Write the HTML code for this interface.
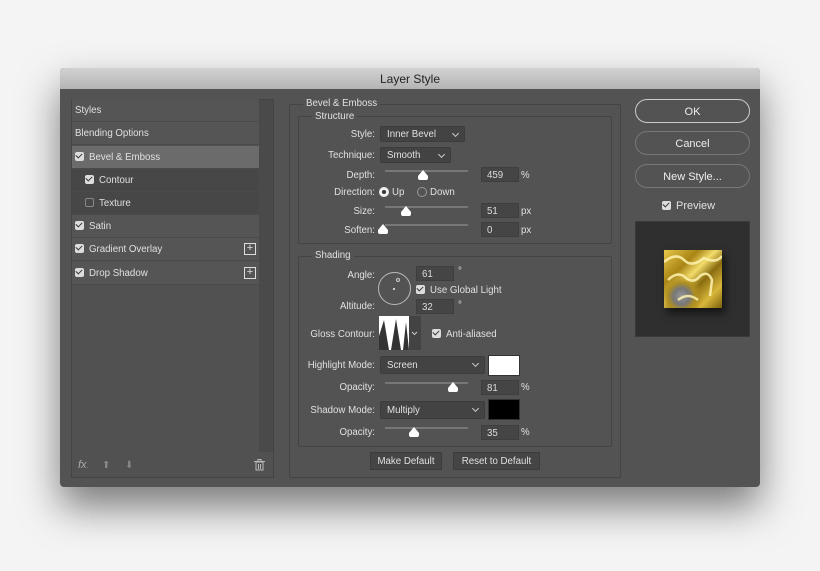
<!DOCTYPE html>
<html><head><style>
*{margin:0;padding:0;box-sizing:border-box}
body{width:820px;height:571px;background:#f4f4f4;font-family:"Liberation Sans",sans-serif;font-size:9.7px;color:#e0e0e0;position:relative;overflow:hidden}
.a{position:absolute}
#dlg{left:60px;top:68px;width:700px;height:419px;background:#535353;border-radius:4px;box-shadow:0 20px 40px rgba(0,0,0,.5)}
#tb{left:60px;top:68px;width:700px;height:21px;background:linear-gradient(#d2d2d2,#b4b4b4);border-radius:4px 4px 0 0;color:#222;font-size:12px;text-align:center;line-height:22px}
.row{position:absolute;left:72px;width:187px;height:23px;border-bottom:1px solid #4a4a4a;line-height:24px;padding-left:3px}
.cb{display:inline-block;width:9px;height:9px;background:#ddd;border-radius:2px;vertical-align:-1px;margin-right:5px;position:relative}
.cb:after{content:"";position:absolute;left:2px;top:0px;width:3px;height:5px;border:solid #333;border-width:0 1.5px 1.5px 0;transform:rotate(45deg)}
.cbo{display:inline-block;width:9px;height:9px;border:1px solid #888;border-radius:2px;vertical-align:-1px;margin-right:5px}
.plus{position:absolute;right:3px;top:5px;width:12px;height:12px;border:1px solid #ddd;font-size:11px;line-height:9px;text-align:center;color:#ddd}
.grp{position:absolute;border:1px solid #444;border-radius:2px}
.lab{position:absolute;text-align:right;width:120px}
.dd{position:absolute;background:#434343;border:1px solid #3c3c3c;border-radius:2px;padding-left:6px;height:16px;line-height:16px}
.dd:after{content:"";position:absolute;right:6px;top:4px;width:4px;height:4px;border:solid #ccc;border-width:0 1px 1px 0;transform:rotate(45deg)}
.in{position:absolute;background:#454545;border:1px solid #3e3e3e;width:38px;height:15px;padding-left:5px;line-height:15px;color:#ddd}
.tr{position:absolute;height:2px;background:#777;width:83px;left:385px}
.th{position:absolute;width:0;height:0}
.th:before{content:"";position:absolute;left:-5px;top:-2px;border-left:5px solid transparent;border-right:5px solid transparent;border-bottom:6px solid #fff}
.th:after{content:"";position:absolute;left:-5px;top:4px;width:10px;height:4px;background:#fff;border-radius:0 0 2px 2px}
.btn{position:absolute;border:1px solid #aaa;border-radius:12px;height:24px;width:115px;left:635px;text-align:center;line-height:24px;font-size:11px;color:#eee}
.sb{position:absolute;background:#454545;border:1px solid #3c3c3c;height:18px;line-height:18px;text-align:center;top:452px}
</style></head><body>
<div id="dlg" class="a"></div>
<div id="tb" class="a">Layer Style</div>

<div class="a" style="left:71px;top:99px;width:203px;height:379px;border:1px solid #444;background:#515151"></div>
<div class="a" style="left:259px;top:100px;width:14px;height:352px;background:#4a4a4a"></div>
<div class="row" style="top:99px;background:#555">Styles</div>
<div class="row" style="top:122px;background:#555">Blending Options</div>
<div class="row" style="top:146px;background:#6b6b6b"><span class="cb"></span>Bevel &amp; Emboss</div>
<div class="row" style="top:169px;background:#474747;padding-left:13px"><span class="cb"></span>Contour</div>
<div class="row" style="top:192px;background:#474747;padding-left:13px"><span class="cbo"></span>Texture</div>
<div class="row" style="top:215px;background:#555"><span class="cb"></span>Satin</div>
<div class="row" style="top:238px;background:#555"><span class="cb"></span>Gradient Overlay<span class="plus">+</span></div>
<div class="row" style="top:262px;background:#555"><span class="cb"></span>Drop Shadow<span class="plus">+</span></div>
<div class="a" style="left:78px;top:459px;font-style:italic;font-size:11px;color:#aaa">fx<span style="font-size:7px">.</span></div>
<div class="a" style="left:102px;top:460px;color:#888;font-size:10px">&#11014;</div>
<div class="a" style="left:125px;top:460px;color:#888;font-size:10px">&#11015;</div>
<svg class="a" style="left:254px;top:459px" width="11" height="12"><rect x="2" y="3" width="7" height="8" fill="none" stroke="#bbb"/><line x1="0" y1="2.5" x2="11" y2="2.5" stroke="#bbb"/><rect x="4" y="0.5" width="3" height="2" fill="none" stroke="#bbb"/><line x1="4.5" y1="5" x2="4.5" y2="10" stroke="#bbb"/><line x1="6.5" y1="5" x2="6.5" y2="10" stroke="#bbb"/></svg>

<div class="grp" style="left:289px;top:104px;width:332px;height:374px"></div>
<div class="a" style="left:303px;top:98px;background:#535353;padding:0 3px">Bevel &amp; Emboss</div>
<div class="grp" style="left:298px;top:116px;width:314px;height:128px"></div>
<div class="a" style="left:312px;top:111px;background:#535353;padding:0 3px">Structure</div>
<div class="lab" style="left:255px;top:129px">Style:</div>
<div class="dd" style="left:380px;top:126px;width:85px">Inner Bevel</div>
<div class="lab" style="left:255px;top:150px">Technique:</div>
<div class="dd" style="left:380px;top:147px;width:71px">Smooth</div>
<div class="lab" style="left:255px;top:170px">Depth:</div>
<div class="tr" style="top:170px"></div><div class="th" style="left:423px;top:172px"></div>
<div class="in" style="left:481px;top:167px">459</div><div class="a" style="left:521px;top:170px">%</div>
<div class="lab" style="left:255px;top:187px">Direction:</div>
<div class="a" style="left:379px;top:187px;width:10px;height:10px;border-radius:50%;background:#eee;border:3px solid #eee"><div style="width:4px;height:4px;border-radius:50%;background:#333"></div></div>
<div class="a" style="left:392px;top:187px">Up</div>
<div class="a" style="left:417px;top:187px;width:10px;height:10px;border-radius:50%;border:1px solid #999"></div>
<div class="a" style="left:430px;top:187px">Down</div>
<div class="lab" style="left:255px;top:206px">Size:</div>
<div class="tr" style="top:206px"></div><div class="th" style="left:406px;top:208px"></div>
<div class="in" style="left:481px;top:203px">51</div><div class="a" style="left:521px;top:206px">px</div>
<div class="lab" style="left:255px;top:225px">Soften:</div>
<div class="tr" style="top:224px"></div><div class="th" style="left:383px;top:226px"></div>
<div class="in" style="left:481px;top:222px">0</div><div class="a" style="left:521px;top:225px">px</div>

<div class="grp" style="left:298px;top:256px;width:314px;height:191px"></div>
<div class="a" style="left:312px;top:250px;background:#535353;padding:0 3px">Shading</div>
<div class="lab" style="left:255px;top:270px">Angle:</div>
<div class="a" style="left:378px;top:272px;width:33px;height:33px;border-radius:50%;border:1px solid #bbb"></div>
<div class="a" style="left:393px;top:288px;width:2px;height:2px;background:#ccc"></div>
<div class="a" style="left:396px;top:278px;width:4px;height:4px;border-radius:50%;border:1px solid #ccc"></div>
<div class="in" style="left:416px;top:266px">61</div><div class="a" style="left:458px;top:266px">°</div>
<div class="a" style="left:416px;top:285px"><span class="cb"></span>Use Global Light</div>
<div class="lab" style="left:255px;top:301px">Altitude:</div>
<div class="in" style="left:416px;top:299px">32</div><div class="a" style="left:458px;top:300px">°</div>
<div class="lab" style="left:255px;top:329px">Gloss Contour:</div>
<svg class="a" style="left:379px;top:316px" width="42" height="34"><rect width="42" height="34" fill="#434343"/><rect width="30" height="34" fill="#fff"/><path d="M0 34 L0 20 L5 4 L10 34 Z M12 34 L17 3 L22 34 Z M24 34 L27 6 L30 34 Z" fill="#333"/><path d="M33 16 l2.5 2.5 l2.5 -2.5" stroke="#ccc" fill="none"/></svg>
<div class="a" style="left:432px;top:329px"><span class="cb"></span>Anti-aliased</div>
<div class="lab" style="left:255px;top:360px">Highlight Mode:</div>
<div class="dd" style="left:380px;top:356px;width:105px;height:18px;line-height:18px">Screen</div>
<div class="a" style="left:488px;top:355px;width:32px;height:21px;background:#fff;border:1px solid #333"></div>
<div class="lab" style="left:255px;top:382px">Opacity:</div>
<div class="tr" style="top:382px"></div><div class="th" style="left:453px;top:384px"></div>
<div class="in" style="left:481px;top:380px">81</div><div class="a" style="left:521px;top:382px">%</div>
<div class="lab" style="left:255px;top:405px">Shadow Mode:</div>
<div class="dd" style="left:380px;top:401px;width:105px;height:18px;line-height:18px">Multiply</div>
<div class="a" style="left:488px;top:399px;width:32px;height:21px;background:#000;border:1px solid #333"></div>
<div class="lab" style="left:255px;top:427px">Opacity:</div>
<div class="tr" style="top:427px"></div><div class="th" style="left:414px;top:429px"></div>
<div class="in" style="left:481px;top:425px">35</div><div class="a" style="left:521px;top:427px">%</div>
<div class="sb" style="left:370px;width:72px">Make Default</div>
<div class="sb" style="left:453px;width:87px">Reset to Default</div>

<div class="btn" style="top:99px;border-color:#ccc">OK</div>
<div class="btn" style="top:131px;border-color:#777">Cancel</div>
<div class="btn" style="top:164px;border-color:#777">New Style...</div>
<div class="a" style="left:662px;top:200px;font-size:11px"><span class="cb"></span>Preview</div>
<div class="a" style="left:635px;top:221px;width:115px;height:116px;background:#2f2f2f;border:1px solid #3a3a3a"></div>
<div class="a" style="left:664px;top:250px;width:58px;height:58px;box-shadow:3px 5px 8px rgba(0,0,0,.6);background:radial-gradient(circle at 30% 80%,#999 0,#777 8px,#b08f20 14px,transparent 22px),linear-gradient(135deg,#e8c84a,#a88415 30%,#f3dc6a 45%,#8a6c10 60%,#d9b73a 80%,#7a5f0d)"></div>
<svg class="a" style="left:664px;top:250px" width="58" height="58"><path d="M0 12 Q12 2 20 10 T40 8 Q52 14 58 6 M4 30 Q14 20 22 28 Q30 34 36 26 Q44 20 48 30 L46 46 M14 50 Q24 42 34 50" stroke="#fff3b0" stroke-width="2.5" fill="none" opacity=".85"/></svg>
</body></html>
